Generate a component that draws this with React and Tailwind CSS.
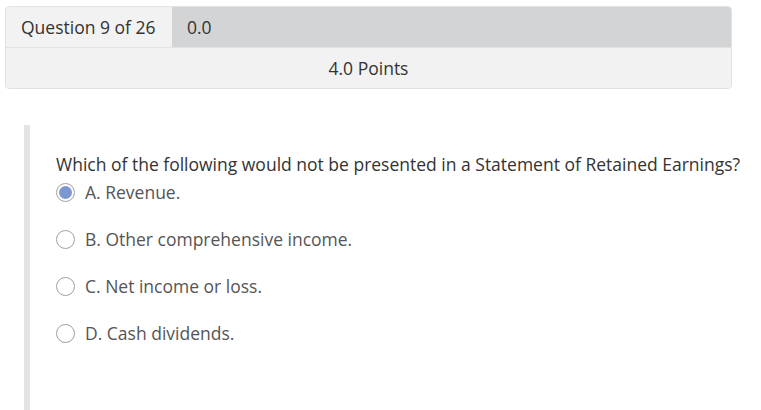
const OPTIONS = [
  { id: 'A', text: 'A. Revenue.', checked: true },
  { id: 'B', text: 'B. Other comprehensive income.' },
  { id: 'C', text: 'C. Net income or loss.' },
  { id: 'D', text: 'D. Cash dividends.' },
];

function Radio({ checked }) {
  return (
    <span className="w-[19px] h-[19px] rounded-full border border-[#a0a0a0] bg-white flex items-center justify-center shrink-0">
      {checked && <span className="w-[13px] h-[13px] rounded-full bg-[#7b98d3]" />}
    </span>
  );
}

export default function App() {
  return (
    <div className="w-[761px] h-[410px] bg-white overflow-hidden font-['Open_Sans',sans-serif]">
      <div className="pt-[6px] pl-[5px]">
        <div className="w-[727px] rounded-[4px] border border-[#e2e2e2] overflow-hidden">
          <div className="flex h-[41px] border-b border-[#e2e2e2]">
            <div className="w-[166px] bg-[#f2f2f2] flex items-center pl-[15px] text-[17.5px] text-[#333]">
              Question 9 of 26
            </div>
            <div className="flex-1 bg-[#d3d4d6] flex items-center pl-[15px] text-[17.5px] text-[#333]">
              0.0
            </div>
          </div>
          <div className="h-[40px] bg-[#f2f2f2] flex items-center justify-center text-[17.5px] text-[#333]">
            4.0 Points
          </div>
        </div>
      </div>

      <div className="mt-[36px] ml-[24px] border-l-[6px] border-[#e4e4e4] h-[300px] pl-[26px] pt-[26px]">
        <p className="text-[17.5px] text-[#333] leading-[26px]">
          Which of the following would not be presented in a Statement of Retained Earnings?
        </p>
        <div className="flex flex-col gap-[21px] mt-[2px]">
          {OPTIONS.map((o) => (
            <label key={o.id} className="flex items-center gap-[10px] h-[26px] text-[17.5px] text-[#555]">
              <Radio checked={o.checked} />
              <span>{o.text}</span>
            </label>
          ))}
        </div>
      </div>
    </div>
  );
}
